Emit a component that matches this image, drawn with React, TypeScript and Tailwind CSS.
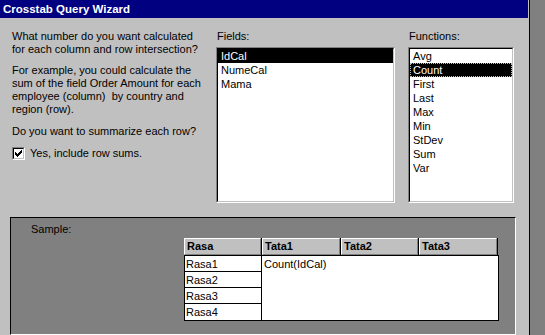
import React from "react";

const fields = ["IdCal", "NumeCal", "Mama"];
const functions = ["Avg", "Count", "First", "Last", "Max", "Min", "StDev", "Sum", "Var"];
const rows = ["Rasa1", "Rasa2", "Rasa3", "Rasa4"];
const cols = ["Tata1", "Tata2", "Tata3"];

function ListBox({
  items,
  selected,
  focused,
  className,
}: {
  items: string[];
  selected: string;
  focused?: boolean;
  className: string;
}) {
  return (
    <div className={`border border-t-[#808080] border-l-[#808080] border-r-white border-b-white ${className}`}>
      <div className="h-full border border-t-black border-l-black border-r-[#c0c0c0] border-b-[#c0c0c0] bg-white">
        {items.map((it) => (
          <div
            key={it}
            className={`h-[14px] leading-[13px] pl-[2px] ${
              it === selected ? "bg-black text-white" : "text-black"
            } ${it === selected && focused ? "border border-dotted border-[#c0c0c0]" : "border border-transparent"}`}
          >
            {it}
          </div>
        ))}
      </div>
    </div>
  );
}

export default function App() {
  return (
    <div
      className="h-[335px] w-[545px] overflow-hidden bg-[#808080] text-[11px] text-black"
      style={{ fontFamily: '"Liberation Sans", Arial, sans-serif' }}
    >
      <div className="w-[530px] h-[360px] bg-[#c0c0c0] border-r border-black">
        <div className="h-[18px] mr-[1px] bg-[#000080] pl-[3px] text-[11.5px] font-bold leading-[18px] text-white">
          Crosstab Query Wizard
        </div>

        <div className="flex pt-[12px]">
          <div className="w-[216px] pl-[12px] leading-[13px]">
            <p>
              What number do you want calculated
              <br />
              for each column and row intersection?
            </p>
            <p className="mt-[8px]">
              For example, you could calculate the
              <br />
              sum of the field Order Amount for each
              <br />
              employee (column)&nbsp; by country and
              <br />
              region (row).
            </p>
            <p className="mt-[9px]">Do you want to summarize each row?</p>
            <div className="mt-[9px] flex items-center">
              <div className="h-[13px] w-[13px] border border-t-[#808080] border-l-[#808080] border-r-white border-b-white">
                <div className="flex h-full w-full items-center justify-center border border-t-black border-l-black border-r-[#c0c0c0] border-b-[#c0c0c0] bg-white">
                  <svg width="7" height="7" viewBox="0 0 7 7" shapeRendering="crispEdges">
                    <path
                      d="M6 0h1v1h-1z M5 1h2v1h-2z M0 2h1v1h-1z M4 2h3v1h-3z M0 3h2v1h-2z M3 3h3v1h-3z M0 4h5v1h-5z M1 5h3v1h-3z M2 6h1v1h-1z"
                      fill="black"
                    />
                  </svg>
                </div>
              </div>
              <span className="ml-[5px]">Yes, include row sums.</span>
            </div>
          </div>

          <div className="w-[179px]">
            <div className="h-[13px] leading-[13px] pl-[1px]">Fields:</div>
            <ListBox items={fields} selected="IdCal" className="mt-[4px] h-[156px]" />
          </div>

          <div className="ml-[13px] w-[106px]">
            <div className="h-[13px] leading-[13px] pl-[1px]">Functions:</div>
            <ListBox items={functions} selected="Count" focused className="mt-[4px] h-[156px]" />
          </div>
        </div>

        <div className="ml-[10px] mt-[14px] h-[118px] w-[506px] border border-t-black border-l-black border-r-white border-b-white bg-[#808080]">
          <div className="pl-[20px] pt-[5px] leading-[13px]">Sample:</div>
          <div className="ml-[173px] mt-[2px] w-[315px]">
            <div className="flex">
              {["Rasa", ...cols].map((c, i) => (
                <div
                  key={c}
                  className={`${i % 2 === 0 ? "w-[78px]" : "w-[79px]"} h-[17px] border-r border-black`}
                >
                  <div className="h-full border border-t-white border-l-white border-r-[#808080] border-b-[#808080] bg-[#c0c0c0] pl-[2px] font-bold leading-[15px]">
                    {c}
                  </div>
                </div>
              ))}
            </div>
            <div className="flex border border-black bg-white">
              <div className="w-[77px] border-r border-black">
                {rows.map((r, i) => (
                  <div
                    key={r}
                    className={`h-[16px] pl-[1px] leading-[16px] ${i < rows.length - 1 ? "border-b border-black" : ""}`}
                  >
                    {r}
                  </div>
                ))}
              </div>
              <div className="flex-1 pl-[2px] leading-[16px]">Count(IdCal)</div>
            </div>
          </div>
        </div>
      </div>
    </div>
  );
}
